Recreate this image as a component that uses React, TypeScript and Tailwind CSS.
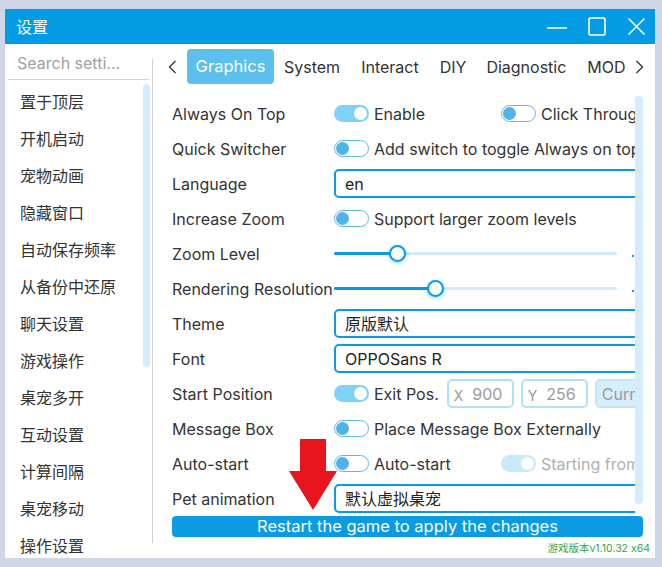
import React from "react";

const FONT = "font-['Inter','Noto_Sans_CJK_SC',sans-serif] [font-feature-settings:'calt'_0]";

function Toggle({ on, disabled }: { on: boolean; disabled?: boolean }) {
  if (on) {
    return (
      <div
        className={`w-[35px] h-[17px] shrink-0 rounded-full flex items-center justify-end pr-[2px] ${
          disabled ? "bg-[#c8e9f9]" : "bg-[#7fd1f8]"
        }`}
      >
        <div className="w-[13px] h-[13px] rounded-full bg-white" />
      </div>
    );
  }
  return (
    <div className="w-[35px] h-[17px] shrink-0 rounded-full border-[1.5px] border-[#5bb9e8] bg-white flex items-center pl-[1px]">
      <div className="w-[13px] h-[13px] rounded-full bg-[#4fb3e6]" />
    </div>
  );
}

function Slider({ pos }: { pos: number }) {
  return (
    <div className="flex items-center w-[300px]">
      <div className="relative w-[284px] h-[18px] flex items-center">
        <div className="h-[3px] w-full bg-[#d3ecfa] rounded-full" />
        <div
          className="absolute left-0 h-[3px] bg-[#0a9be4] rounded-full"
          style={{ width: pos }}
        />
        <div
          className="absolute w-[17px] h-[17px] rounded-full bg-white border-2 border-[#0a9be4] shadow-[0_1px_4px_rgba(10,155,228,0.45)]"
          style={{ left: pos - 8 }}
        />
      </div>
      <div className="ml-[15px] w-[2px] h-[2px] bg-[#0a9be4] mt-[4px]" />
    </div>
  );
}

function Select({ value }: { value: string }) {
  return (
    <div className="w-[330px] h-[29px] shrink-0 border-2 border-[#0a9be4] rounded-[5px] flex items-center pl-[9px] text-[16px] text-[#222]">
      {value}
    </div>
  );
}

function Row({ label, children }: { label: string; children: React.ReactNode }) {
  return (
    <div className="flex items-center h-[35px]">
      <div className="w-[162px] shrink-0 text-[16px] text-[#333] whitespace-nowrap">{label}</div>
      <div className="flex items-center min-w-0 whitespace-nowrap text-[16px] text-[#333]">{children}</div>
    </div>
  );
}

const sideItems = [
  "置于顶层",
  "开机启动",
  "宠物动画",
  "隐藏窗口",
  "自动保存频率",
  "从备份中还原",
  "聊天设置",
  "游戏操作",
  "桌宠多开",
  "互动设置",
  "计算间隔",
  "桌宠移动",
  "操作设置",
];

export default function App() {
  return (
    <div className={`w-[662px] h-[567px] bg-[#cfd7e6] pt-[9px] pl-[5px] overflow-hidden ${FONT}`}>
      <div className="w-[650px] h-[549px] bg-white flex flex-col">
        {/* Title bar */}
        <div className="h-[35px] bg-[#049be5] flex items-center shrink-0">
          <div className="ml-[11px] text-white text-[16px]">设置</div>
          <div className="flex-1" />
          <svg width="20" height="20" viewBox="0 0 20 20" className="mr-[21px]">
            <line x1="0" y1="11" x2="20" y2="11" stroke="white" strokeWidth="1.5" />
          </svg>
          <svg width="18" height="19" viewBox="0 0 18 19" className="mr-[22px]">
            <rect x="1" y="1" width="16" height="17" rx="1.5" fill="none" stroke="white" strokeWidth="1.6" />
          </svg>
          <svg width="17" height="17" viewBox="0 0 17 17" className="mr-[10px]">
            <line x1="0.5" y1="0.5" x2="16.5" y2="16.5" stroke="white" strokeWidth="1.5" />
            <line x1="16.5" y1="0.5" x2="0.5" y2="16.5" stroke="white" strokeWidth="1.5" />
          </svg>
        </div>

        {/* Body */}
        <div className="flex flex-1 min-h-0">
          {/* Sidebar */}
          <div className="w-[147px] shrink-0 flex flex-col">
            <div className="h-[35px] mt-[1px] mx-[3px] border-b border-[#d4d4d4] flex items-end pb-[4px] pl-[9px] text-[16px] text-[#a0a0a0] whitespace-nowrap">
              Search setti...
            </div>
            <div className="flex flex-1 min-h-0 mt-[4px]">
              <div className="flex-1 flex flex-col overflow-hidden pl-[15px] -mt-[2px]">
                {sideItems.map((s, i) => (
                  <div
                    key={i}
                    className="h-[37px] shrink-0 flex items-center text-[16px] text-[#333] whitespace-nowrap font-['Noto_Sans_CJK_SC',sans-serif]"
                  >
                    {s}
                  </div>
                ))}
              </div>
              <div className="w-[7px] h-[283px] rounded-full bg-[#d6ecfa] mr-[2px]" />
            </div>
          </div>

          {/* Divider */}
          <div className="w-px bg-[#d0d0d0] mt-[15px] mb-[15px] shrink-0" />

          {/* Main */}
          <div className="flex-1 min-w-0 flex flex-col relative">
            {/* Tabs */}
            <div className="h-[35px] mt-[5px] flex items-center text-[16px] text-[#333] whitespace-nowrap">
              <svg width="9" height="14" viewBox="0 0 9 14" className="ml-[15px] mr-[10px]">
                <polyline points="7.5,1 1.5,7 7.5,13" fill="none" stroke="#333" strokeWidth="1.3" />
              </svg>
              <div className="h-[35px] w-[87px] rounded-[4px] bg-[#5cbfec] text-white flex items-center justify-center text-[16.5px]">
                Graphics
              </div>
              <div className="ml-[10px]">System</div>
              <div className="ml-[21px]">Interact</div>
              <div className="ml-[21px]">DIY</div>
              <div className="ml-[20px]">Diagnostic</div>
              <div className="ml-[21px]">MOD</div>
              <svg width="9" height="14" viewBox="0 0 9 14" className="ml-[9px]">
                <polyline points="1.5,1 7.5,7 1.5,13" fill="none" stroke="#333" strokeWidth="1.3" />
              </svg>
            </div>

            {/* Rows + scrollbar */}
            <div className="flex mt-[12px] pl-[19px]">
              <div className="w-[463px] overflow-hidden flex flex-col">
                <Row label="Always On Top">
                  <div className="w-[167px] flex items-center shrink-0">
                    <Toggle on />
                    <span className="ml-[5px]">Enable</span>
                  </div>
                  <Toggle on={false} />
                  <span className="ml-[5px]">Click Through</span>
                </Row>
                <Row label="Quick Switcher">
                  <Toggle on={false} />
                  <span className="ml-[5px]">Add switch to toggle Always on top</span>
                </Row>
                <Row label="Language">
                  <Select value="en" />
                </Row>
                <Row label="Increase Zoom">
                  <Toggle on={false} />
                  <span className="ml-[5px]">Support larger zoom levels</span>
                </Row>
                <Row label="Zoom Level">
                  <Slider pos={63} />
                </Row>
                <Row label="Rendering Resolution">
                  <Slider pos={101} />
                </Row>
                <Row label="Theme">
                  <Select value="原版默认" />
                </Row>
                <Row label="Font">
                  <Select value="OPPOSans R" />
                </Row>
                <Row label="Start Position">
                  <Toggle on />
                  <span className="ml-[5px]">Exit Pos.</span>
                  <div className="ml-[8px] w-[67px] h-[29px] shrink-0 border-2 border-[#b3e0f7] rounded-[5px] flex items-center pl-[5px] text-[#9a9a9a]">
                    <span className="text-[14px] mt-[4px]">X</span>
                    <span className="ml-[9px]">900</span>
                  </div>
                  <div className="ml-[7px] w-[67px] h-[29px] shrink-0 border-2 border-[#b3e0f7] rounded-[5px] flex items-center pl-[5px] text-[#9a9a9a]">
                    <span className="text-[14px] mt-[4px]">Y</span>
                    <span className="ml-[9px]">256</span>
                  </div>
                  <div className="ml-[7px] w-[80px] h-[29px] shrink-0 border-2 border-[#c4e4f8] bg-[#d8edfb] rounded-[5px] flex items-center pl-[5px] text-[#9a9a9a]">
                    Current
                  </div>
                </Row>
                <Row label="Message Box">
                  <Toggle on={false} />
                  <span className="ml-[5px]">Place Message Box Externally</span>
                </Row>
                <Row label="Auto-start">
                  <div className="w-[167px] flex items-center shrink-0">
                    <Toggle on={false} />
                    <span className="ml-[5px]">Auto-start</span>
                  </div>
                  <Toggle on disabled />
                  <span className="ml-[5px] text-[#b0b0b0]">Starting from boot</span>
                </Row>
                <Row label="Pet animation">
                  <Select value="默认虚拟桌宠" />
                </Row>
              </div>
              <div className="w-[8px] h-[408px] rounded-full bg-[#d6ecfa]" />
            </div>

            {/* Restart button */}
            <div className="ml-[19px] w-[471px] h-[21px] rounded-[4px] bg-[#0a9be3] text-white text-[16.5px] flex items-center justify-center whitespace-nowrap">
              Restart the game to apply the changes
            </div>
            <div className="mr-[5px] mt-[4px] text-right text-[10.5px] text-[#3ba33b] whitespace-nowrap">
              游戏版本v1.10.32 x64
            </div>

            {/* Red arrow overlay */}
            <svg
              width="50"
              height="72"
              viewBox="0 0 50 72"
              className="absolute left-[135px] top-[395px]"
            >
              <polygon points="12,0 38,0 38,32 49,32 25,71 1,32 12,32" fill="#e8161c" />
            </svg>
          </div>
        </div>
      </div>
    </div>
  );
}
